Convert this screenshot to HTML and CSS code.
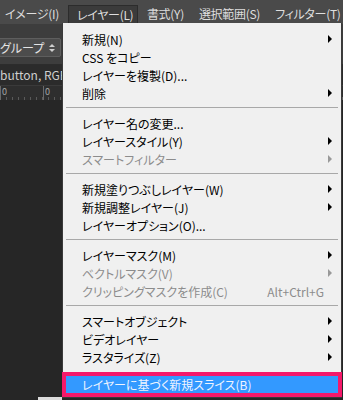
FILE: index.html
```html
<!DOCTYPE html>
<html lang="ja">
<head>
  <meta charset="UTF-8" />
  <title>レイヤーメニュー</title>
  <link rel="stylesheet" href="styles.css">
</head>
<body>

<!-- Menu bar -->
<div class="menubar">
  <div class="menubar-item">イメージ(I)</div>
  <div class="menubar-item open">レイヤー(L)</div>
  <div class="menubar-item">書式(Y)</div>
  <div class="menubar-item">選択範囲(S)</div>
  <div class="menubar-item">フィルター(T)</div>
</div>

<!-- Panel behind the menu -->
<div class="workspace">
  <div class="options-bar">
    <div class="select">
      <span class="select-text">グループ</span>
      <span class="select-arrows">
        <span class="up"></span>
        <span class="down"></span>
      </span>
    </div>
  </div>
  <div class="doc-tab">button, RGB</div>
  <div class="ruler">
    <span class="ruler-num">0</span>
    <span class="ruler-num second">0</span>
  </div>
  <div class="canvas-area"></div>
  <div class="status-strip"></div>
</div>

<!-- Layer menu -->
<div class="menu">
  <div class="menu-item has-sub"><span class="label">新規(N)</span><span class="arrow"></span></div>
  <div class="menu-item"><span class="label">CSS をコピー</span></div>
  <div class="menu-item"><span class="label">レイヤーを複製(D)...</span></div>
  <div class="menu-item has-sub"><span class="label">削除</span><span class="arrow"></span></div>
  <div class="separator"></div>

  <div class="menu-item"><span class="label">レイヤー名の変更...</span></div>
  <div class="menu-item has-sub"><span class="label">レイヤースタイル(Y)</span><span class="arrow"></span></div>
  <div class="menu-item disabled has-sub"><span class="label">スマートフィルター</span><span class="arrow"></span></div>
  <div class="separator"></div>

  <div class="menu-item has-sub"><span class="label">新規塗りつぶしレイヤー(W)</span><span class="arrow"></span></div>
  <div class="menu-item has-sub"><span class="label">新規調整レイヤー(J)</span><span class="arrow"></span></div>
  <div class="menu-item"><span class="label">レイヤーオプション(O)...</span></div>
  <div class="separator"></div>

  <div class="menu-item has-sub"><span class="label">レイヤーマスク(M)</span><span class="arrow"></span></div>
  <div class="menu-item disabled has-sub"><span class="label">ベクトルマスク(V)</span><span class="arrow"></span></div>
  <div class="menu-item disabled"><span class="label">クリッピングマスクを作成(C)</span><span class="shortcut">Alt+Ctrl+G</span></div>
  <div class="separator"></div>

  <div class="menu-item has-sub"><span class="label">スマートオブジェクト</span><span class="arrow"></span></div>
  <div class="menu-item has-sub"><span class="label">ビデオレイヤー</span><span class="arrow"></span></div>
  <div class="menu-item has-sub"><span class="label">ラスタライズ(Z)</span><span class="arrow"></span></div>

  <div class="menu-item selected"><span class="label">レイヤーに基づく新規スライス(B)</span></div>
</div>

</body>
</html>
```

FILE: styles.css
```css
:root {
  --bar: #4a4a4a;
  --panel: #3d3d3d;
  --dark: #262626;
  --menu-bg: #f0f0f0;
  --disabled: #8c8c8c;
  --highlight: #3399ff;
  --mark: #f5186a;
}

body {
  margin: 0;
  width: 343px;
  height: 400px;
  overflow: hidden;
  position: relative;
  background: var(--dark);
  font-family: "Noto Sans CJK JP", sans-serif;
  font-size: 12px;
  font-feature-settings: "palt";
}

/* Menu bar */
.menubar {
  height: 24px;
  display: flex;
  align-items: flex-end;
  background: var(--bar);
  color: #dedede;
  padding-left: 5px;
  gap: 15px;
  white-space: nowrap;
  letter-spacing: -0.3px;
}

.menubar-item {
  height: 19px;
  line-height: 17px;
}

.menubar-item.open {
  margin: 0 -6px;
  padding: 0 8px;
  background: #3b3b3b;
  border: 1px solid #2c2c2c;
  border-bottom: none;
  box-sizing: border-box;
  width: 70px;
}

/* Workspace behind the menu */
.workspace {
  display: flex;
  flex-direction: column;
  height: 376px;
}

.options-bar {
  height: 41px;
  background: var(--panel);
  border-bottom: 1px solid #2c2c2c;
  padding-top: 14px;
  box-sizing: border-box;
}

.select {
  width: 66px;
  height: 19px;
  margin-left: -5px;
  padding: 0 5px 0 4px;
  box-sizing: border-box;
  background: #4c4c4c;
  border: 1px solid #5e5e5e;
  border-radius: 2px;
  color: #e4e4e4;
  display: flex;
  align-items: center;
  justify-content: space-between;
  line-height: 17px;
  white-space: nowrap;
}

.select-text {
  flex-shrink: 0;
}

.select-arrows {
  display: flex;
  flex-direction: column;
  gap: 2px;
}

.select-arrows .up,
.select-arrows .down {
  width: 0;
  height: 0;
  border-left: 3px solid transparent;
  border-right: 3px solid transparent;
}

.select-arrows .up { border-bottom: 3px solid #cfcfcf; }
.select-arrows .down { border-top: 3px solid #cfcfcf; }

.doc-tab {
  height: 20px;
  line-height: 20px;
  background: #2b2b2b;
  color: #cfcfcf;
  white-space: nowrap;
}

.ruler {
  height: 14px;
  background: #2e2e2e;
  border-top: 1px solid #3a3a3a;
  color: #a8a8a8;
  font-size: 9px;
  line-height: 12px;
  display: flex;
  gap: 37px;
  background-image: repeating-linear-gradient(to right, #5a5a5a 0 1px, transparent 1px 6px);
  background-size: 100% 3px;
  background-position: 0 bottom;
  background-repeat: no-repeat;
}

.ruler-num {
  padding-left: 1px;
  border-left: 1px solid #6a6a6a;
}

.ruler-num.second {
  margin-left: -1px;
}

.canvas-area {
  flex: 1;
  background: var(--dark);
}

.status-strip {
  height: 3px;
  margin-left: 38px;
  width: 24px;
  background: #dcdcdc;
}

/* Dropdown menu */
.menu {
  position: absolute;
  top: 23px;
  left: 62px;
  width: 280px;
  box-sizing: border-box;
  background: var(--menu-bg);
  border: 1px solid #3a3a3a;
  border-top: none;
  padding-top: 7px;
  color: #000;
}

.menu-item {
  height: 18px;
  display: flex;
  align-items: center;
  padding: 0 9px 0 19px;
  white-space: nowrap;
}

.menu-item .label {
  flex: 1;
}

.menu-item .shortcut {
  margin-right: 8px;
}

.arrow {
  width: 0;
  height: 0;
  border-top: 4px solid transparent;
  border-bottom: 4px solid transparent;
  border-left: 4px solid #000;
}

.menu-item.disabled {
  color: var(--disabled);
}

.menu-item.disabled .arrow {
  border-left-color: #999;
}

.separator {
  height: 1px;
  background: #a8a8a8;
  margin: 5px 3px 6px 3px;
}

.menu-item.selected {
  margin: 6px -1px 0 -1px;
  height: 25px;
  border: 4px solid var(--mark);
  box-sizing: border-box;
  background: var(--highlight);
  color: #eef4ff;
  padding-left: 16px;
}
```
